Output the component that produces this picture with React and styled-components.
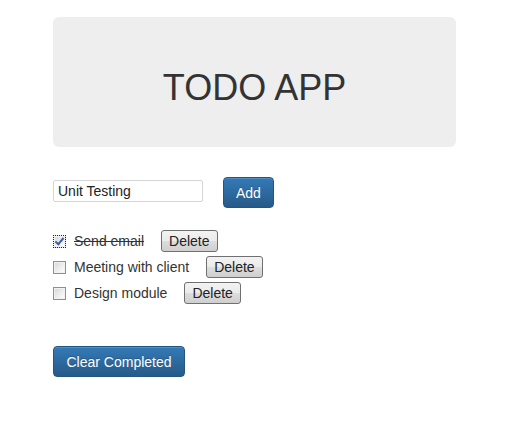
import React, { useState } from "react";
import styled, { createGlobalStyle } from "styled-components";

const GlobalStyle = createGlobalStyle`
	body {
		margin: 0;
		background: #fff;
		font-family: "Liberation Sans", Arial, sans-serif;
		font-size: 14px;
		color: #333;
	}
`;

const Page = styled.div`
	width: 403px;
	padding: 17px 0 0 53px;
`;

const Jumbotron = styled.div`
	box-sizing: border-box;
	height: 130px;
	padding-top: 11px;
	background: #eeeeee;
	border-radius: 6px;
	display: flex;
	align-items: center;
	justify-content: center;
`;

const Title = styled.h1`
	margin: 0;
	font-size: 36px;
	font-weight: 400;
	color: #333;
`;

const AddRow = styled.div`
	display: flex;
	align-items: flex-start;
	gap: 20px;
	margin-top: 30px;
`;

const TextInput = styled.input`
	box-sizing: border-box;
	width: 150px;
	height: 22px;
	margin-top: 3px;
	padding: 1px 4px;
	border: 1px solid #d5d5d5;
	border-radius: 2px;
	font-family: inherit;
	font-size: 14px;
	color: #222;
	outline: none;
`;

const BlueButton = styled.button`
	box-sizing: border-box;
	height: 31px;
	padding: 0 ${(p) => (p.$wide ? "12.5px" : "12px")};
	border: 1px solid #245580;
	border-radius: 4px;
	background: linear-gradient(to bottom, #337ab7 0%, #265a88 100%);
	color: #fff;
	font-family: inherit;
	font-size: 14px;
	cursor: pointer;
	text-shadow: 0 -1px 0 rgba(0, 0, 0, 0.2);
	box-shadow: inset 0 1px 0 rgba(255, 255, 255, 0.15);
`;

const List = styled.ul`
	list-style: none;
	margin: 22px 0 0;
	padding: 0;
	display: flex;
	flex-direction: column;
	gap: 4px;
`;

const Item = styled.li`
	display: flex;
	align-items: center;
	height: 22px;
`;

const Check = styled.input`
	appearance: none;
	position: relative;
	box-sizing: border-box;
	margin: 0 8px 0 0;
	width: 13px;
	height: 13px;
	border: 1px ${(p) => (p.checked ? "dotted #222" : "solid #8f8f8f")};
	background: linear-gradient(135deg, #d6d6d6 0%, #f0f0f0 60%, #ffffff 100%);
	box-shadow: inset 0 0 0 1px #f2f2f2;
	cursor: pointer;

	&:checked::after {
		content: "";
		position: absolute;
		left: 3px;
		top: 0px;
		width: 3px;
		height: 7px;
		border-right: 2px solid #3d5fa8;
		border-bottom: 2px solid #3d5fa8;
		transform: rotate(40deg);
	}
`;

const Label = styled.span`
	color: #333;
	text-decoration: ${(p) => (p.$done ? "line-through" : "none")};
	margin-right: 17px;
`;

const GreyButton = styled.button`
	box-sizing: border-box;
	height: 22px;
	padding: 0 7px;
	border: 1px solid #707070;
	border-radius: 3px;
	background: linear-gradient(to bottom, #f2f2f2 0%, #ebebeb 50%, #dddddd 51%, #cfcfcf 100%);
	color: #222;
	font-family: inherit;
	font-size: 14px;
	cursor: pointer;
`;

const Footer = styled.div`
	margin-top: 42px;
`;

const initial = [
	{ id: 1, text: "Send email", done: true },
	{ id: 2, text: "Meeting with client", done: false },
	{ id: 3, text: "Design module", done: false },
];

export default function App() {
	const [todos, setTodos] = useState(initial);
	const [text, setText] = useState("Unit Testing");

	const add = () => {
		if (!text.trim()) return;
		setTodos([...todos, { id: Date.now(), text, done: false }]);
		setText("");
	};

	return (
		<>
			<GlobalStyle />
			<Page>
				<Jumbotron>
					<Title>TODO APP</Title>
				</Jumbotron>
				<AddRow>
					<TextInput value={text} onChange={(e) => setText(e.target.value)} />
					<BlueButton onClick={add}>Add</BlueButton>
				</AddRow>
				<List>
					{todos.map((t) => (
						<Item key={t.id}>
							<Check
								type="checkbox"
								checked={t.done}
								onChange={() =>
									setTodos(todos.map((x) => (x.id === t.id ? { ...x, done: !x.done } : x)))
								}
							/>
							<Label $done={t.done}>{t.text}</Label>
							<GreyButton onClick={() => setTodos(todos.filter((x) => x.id !== t.id))}>
								Delete
							</GreyButton>
						</Item>
					))}
				</List>
				<Footer>
					<BlueButton $wide onClick={() => setTodos(todos.filter((x) => !x.done))}>
						Clear Completed
					</BlueButton>
				</Footer>
			</Page>
		</>
	);
}
